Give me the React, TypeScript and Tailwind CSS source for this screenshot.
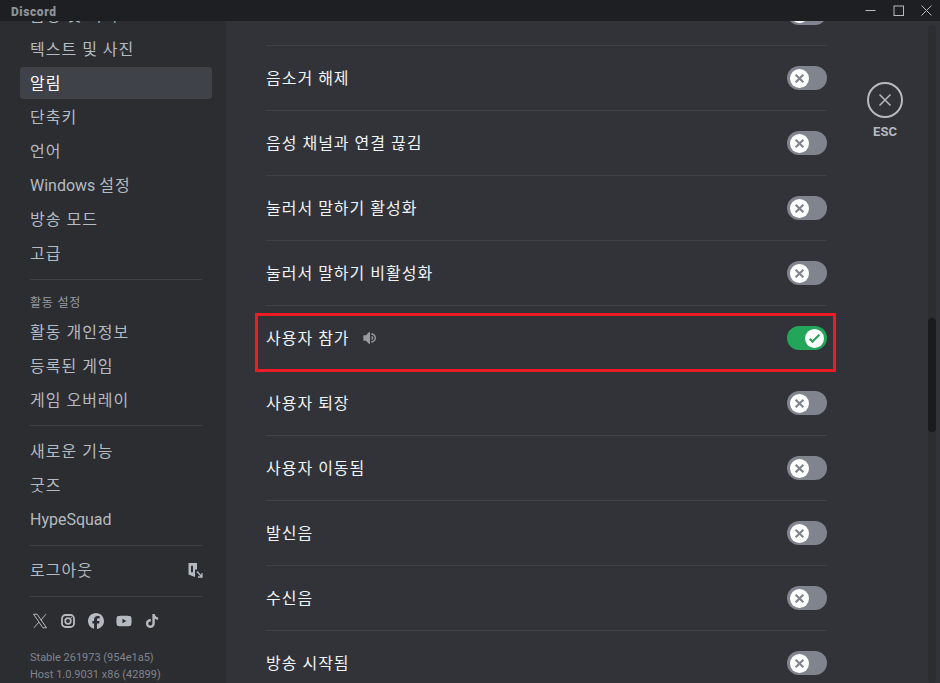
import type { ReactNode } from "react";
import { FaFacebook, FaYoutube, FaTiktok } from "react-icons/fa6";

const font = { fontFamily: 'Roboto, "Noto Sans CJK KR", sans-serif' };

function Toggle({ on = false }: { on?: boolean }) {
  return (
    <div className={on ? "flex h-6 w-10 shrink-0 items-center justify-end rounded-full bg-[#23a55a] px-[3px]" : "flex h-6 w-10 shrink-0 items-center justify-start rounded-full bg-[#80848e] px-[3px]"}>
      <div className="flex h-[19px] w-[19px] items-center justify-center rounded-full bg-white">
        {on ? (
          <svg viewBox="0 0 20 20" className="h-[19px] w-[19px]" fill="#23a55a">
            <path d="M7.89561 14.8538L6.30462 13.2629L14.3099 5.25755L15.9009 6.84854L7.89561 14.8538Z" />
            <path d="M4.08643 11.0903L5.67742 9.49929L9.4485 13.2704L7.85751 14.8614L4.08643 11.0903Z" />
          </svg>
        ) : (
          <svg viewBox="0 0 20 20" className="h-[19px] w-[19px]" fill="#80848e">
            <path d="M5.13231 6.72963L6.7233 5.13864L14.855 13.2704L13.264 14.8614L5.13231 6.72963Z" />
            <path d="M13.2704 5.13864L14.8614 6.72963L6.72963 14.8614L5.13864 13.2704L13.2704 5.13864Z" />
          </svg>
        )}
      </div>
    </div>
  );
}

function NavItem({ children, active = false }: { children: ReactNode; active?: boolean }) {
  return (
    <div className={active ? "mb-[2px] flex h-8 items-center rounded-[4px] bg-[#404249] px-[10px] pt-[2px] text-[16px] tracking-[1px] text-white" : "mb-[2px] flex h-8 items-center rounded-[4px] px-[10px] pt-[2px] text-[16px] tracking-[1px] text-[#b5bac1]"}>
      <span className="whitespace-pre">{children}</span>
    </div>
  );
}

function Row({ label, on = false, speaker = false }: { label: string; on?: boolean; speaker?: boolean }) {
  return (
    <div className="flex h-[65px] items-center justify-between border-b border-[#3f4147]">
      <div className="flex items-center gap-[13px] text-[16px] tracking-[1px] text-[#f2f3f5]">
        <span className="pt-[2px]">{label}</span>
        {speaker && (
          <svg viewBox="0 0 24 24" className="ml-[-1px] h-4 w-4" fill="#989aa2">
            <path d="M11.383 3.07904C11.009 2.92504 10.579 3.01004 10.293 3.29604L6 8.00204H3C2.45 8.00204 2 8.45304 2 9.00204V15.002C2 15.552 2.45 16.002 3 16.002H6L10.293 20.71C10.579 20.996 11.009 21.082 11.383 20.927C11.757 20.772 12 20.407 12 20.002V4.00204C12 3.59904 11.757 3.23204 11.383 3.07904ZM14 5.00195V7.00195C16.757 7.00195 19 9.24595 19 12.002C19 14.759 16.757 17.002 14 17.002V19.002C17.86 19.002 21 15.863 21 12.002C21 8.14295 17.86 5.00195 14 5.00195ZM14 9.00195C15.654 9.00195 17 10.349 17 12.002C17 13.657 15.654 15.002 14 15.002V13.002C14.551 13.002 15 12.553 15 12.002C15 11.451 14.551 11.002 14 11.002V9.00195Z" />
          </svg>
        )}
      </div>
      <Toggle on={on} />
    </div>
  );
}

const rows = ["\u00a0", "음소거 해제", "음성 채널과 연결 끊김", "눌러서 말하기 활성화", "눌러서 말하기 비활성화"];
const rows2 = ["사용자 퇴장", "사용자 이동됨", "발신음", "수신음", "방송 시작됨"];

export default function App() {
  return (
    <div className="flex h-[683px] w-[940px] flex-col overflow-hidden bg-[#313338]" style={font}>
      <div className="flex h-[21px] shrink-0 items-center justify-between bg-[#1e1f22] pl-[11px]">
        <span className="pt-[2px] text-[12px] font-black leading-none tracking-[0.6px] text-[#8e9297]">Discord</span>
        <div className="flex h-full items-center text-[#b5bac1]">
          <div className="flex h-full w-[28px] items-center justify-center">
            <svg width="11" height="11" viewBox="0 0 11 11"><path d="M0.5 5.5h10" stroke="currentColor" /></svg>
          </div>
          <div className="flex h-full w-[28px] items-center justify-center">
            <svg width="11" height="11" viewBox="0 0 11 11"><rect x="1" y="1" width="9.5" height="9.5" fill="none" stroke="currentColor" /></svg>
          </div>
          <div className="flex h-full w-[28px] items-center justify-center">
            <svg width="11" height="11" viewBox="0 0 11 11"><path d="M0.5 0.5l10 10M10.5 0.5l-10 10" stroke="currentColor" /></svg>
          </div>
        </div>
      </div>
      <div className="flex min-h-0 flex-1">
        <div className="h-full w-[226px] shrink-0 overflow-hidden bg-[#2b2d31] pl-[20px] pr-[14px]">
          <div className="mt-[-22px]">
            <NavItem>음성 및 비디오</NavItem>
            <NavItem>텍스트 및 사진</NavItem>
            <NavItem active>알림</NavItem>
            <NavItem>단축키</NavItem>
            <NavItem>언어</NavItem>
            <NavItem><span className="tracking-normal">Windows </span>설정</NavItem>
            <NavItem>방송 모드</NavItem>
            <NavItem>고급</NavItem>
            <div className="mx-[10px] mb-[7px] mt-[10px] h-px bg-[#3f4147]" />
            <div className="px-[10px] pb-[5px] pt-[8px] text-[12px] leading-4 tracking-[0.8px] text-[#949ba4]">활동 설정</div>
            <NavItem>활동 개인정보</NavItem>
            <NavItem>등록된 게임</NavItem>
            <NavItem>게임 오버레이</NavItem>
            <div className="mx-[10px] mb-[9px] mt-[9px] h-px bg-[#3f4147]" />
            <NavItem>새로운 기능</NavItem>
            <NavItem>굿즈</NavItem>
            <NavItem><span className="tracking-normal">HypeSquad</span></NavItem>
            <div className="mx-[10px] mb-[8px] mt-[10px] h-px bg-[#3f4147]" />
            <div className="mb-[10px] flex h-8 items-center justify-between rounded-[4px] px-[10px] text-[16px] tracking-[1px] text-[#b5bac1]">
              <span className="pt-[2px]">로그아웃</span>
              <svg viewBox="0 0 16 16" className="mr-[-1px] h-4 w-4" fill="none">
                <path d="M1.5 1h8.5v6.5h-2v7.5l-6.5-2.5z" fill="#b5bac1" />
                <path d="M5 4.5v5" stroke="#2b2d31" strokeWidth="2" strokeLinecap="round" />
                <path d="M10 9.5l4.5 5M15 11v4h-4" stroke="#b5bac1" strokeWidth="1.3" />
              </svg>
            </div>
            <div className="mx-[10px] mb-[8px] mt-[8px] h-px bg-[#3f4147]" />
            <div className="flex items-center gap-[12px] px-[12px] py-2 text-[#b5bac1]">
              <svg viewBox="0 0 16 16" className="h-4 w-4" fill="none" stroke="currentColor" strokeWidth="1">
                <path d="M1.5 1.2h3.6l9.4 13.6h-3.6z" />
                <path d="M14 1.2L8.8 7.2M6.9 9.2L1.9 14.8" />
              </svg>
              <svg viewBox="0 0 16 16" className="h-4 w-4" fill="none" stroke="currentColor">
                <rect x="2" y="2" width="12" height="12" rx="3.5" strokeWidth="1.8" />
                <circle cx="8" cy="8" r="2.8" strokeWidth="1.7" />
                <circle cx="11.4" cy="4.6" r="0.7" fill="currentColor" stroke="none" />
              </svg>
              <FaFacebook size={16} />
              <FaYoutube size={16} />
              <FaTiktok size={14} className="mx-[1px]" />
            </div>
            <div className="mt-[12px] px-[10px] text-[11px] leading-[17px] text-[#80848e]">
              <div>Stable 261973 (954e1a5)</div>
              <div>Host 1.0.9031 x86 (42899)</div>
            </div>
          </div>
        </div>
        <div className="relative min-w-0 flex-1 overflow-hidden">
          <div className="flex">
            <div className="ml-[40px] mt-[-40px] w-[561px] shrink-0">
              {rows.map((r, i) => (
                <Row key={i} label={r} />
              ))}
              <Row label="사용자 참가" on speaker />
              {rows2.map((r) => (
                <Row key={r} label={r} />
              ))}
            </div>
            <div className="ml-[40px] mt-[61px] flex w-[36px] shrink-0 flex-col items-center">
              <div className="flex h-9 w-9 items-center justify-center rounded-full border-2 border-[#b5bac1] text-[#b5bac1]">
                <svg width="18" height="18" viewBox="0 0 18 18"><path d="M3.5 3.5l11 11M14.5 3.5l-11 11" stroke="currentColor" strokeWidth="1.5" /></svg>
              </div>
              <div className="mt-[4px] text-[13px] font-bold text-[#b5bac1]">ESC</div>
            </div>
          </div>
          <div className="absolute left-[29px] top-[292px] h-[59px] w-[581px] border-[3px] border-[#ed1c24]" />
          <div className="absolute bottom-0 right-[4px] top-[4px] w-2 rounded-full bg-[#2b2d31]" />
          <div className="absolute right-[4px] top-[297px] h-[114px] w-2 rounded-full bg-[#1a1b1e]" />
        </div>
      </div>
    </div>
  );
}
